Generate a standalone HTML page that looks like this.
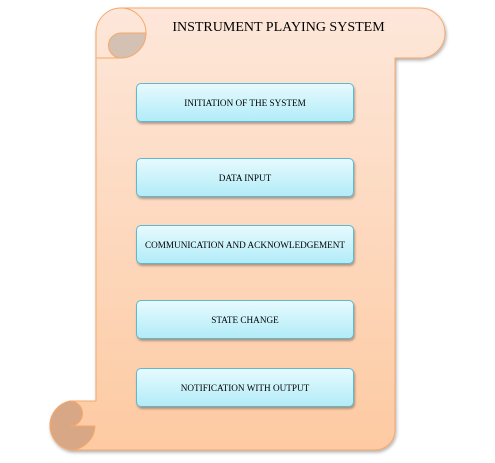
<!DOCTYPE html>
<html><head><style>
html,body{margin:0;padding:0;background:#fff;width:495px;height:463px;overflow:hidden;position:relative;font-family:"Liberation Serif",serif;}
.box{position:absolute;left:136px;width:216px;height:37px;border:1px solid #5fb8cc;border-radius:5px;background:linear-gradient(#e6fafe,#b2ecf8);box-shadow:1px 2px 2px rgba(0,0,0,.3);font-size:9.2px;color:#000;display:flex;align-items:center;justify-content:center;}
</style></head><body>
<svg width="495" height="463" style="position:absolute;left:0;top:0">
<defs>
<linearGradient id="g" x1="0" y1="0" x2="0" y2="1"><stop offset="0" stop-color="#fde7da"/><stop offset="1" stop-color="#fdcaa2"/></linearGradient>
<filter id="s"><feDropShadow dx="1" dy="2" stdDeviation="1.5" flood-opacity="0.3"/></filter>
</defs>
<g filter="url(#s)">
<path d="M96 33 A25 25 0 0 1 121 8 H420 A25 25 0 0 1 420 58 H395 V430 A20 20 0 0 1 375 450 H70 A25 25 0 0 1 70 401 H96 Z" fill="url(#g)" stroke="#f6a86a" stroke-width="1"/>
</g>
<path d="M121 33 H146 A25 25 0 0 1 121 58 A12.5 12.5 0 0 1 121 33 Z" fill="#d4c1b3" stroke="#f6a86a"/>
<path d="M121 8 A25 25 0 0 1 146 33" fill="none" stroke="#f6a86a"/>
<path d="M70 401 A12.5 12.5 0 0 1 70 426 H95 A25 25 0 0 1 70 450 A25 25 0 0 1 70 401 Z" fill="#d7a786" stroke="#f6a86a"/>
<line x1="96" y1="58" x2="121" y2="58" stroke="#f6a86a"/>
</svg>
<div style="position:absolute;left:146px;top:20px;width:265px;text-align:center;font-size:14px;color:#000">INSTRUMENT PLAYING SYSTEM</div>
<div class="box" style="top:83px">INITIATION OF THE SYSTEM</div>
<div class="box" style="top:158px">DATA INPUT</div>
<div class="box" style="top:225px">COMMUNICATION AND ACKNOWLEDGEMENT</div>
<div class="box" style="top:300px">STATE CHANGE</div>
<div class="box" style="top:368px">NOTIFICATION WITH OUTPUT</div>
</body></html>
